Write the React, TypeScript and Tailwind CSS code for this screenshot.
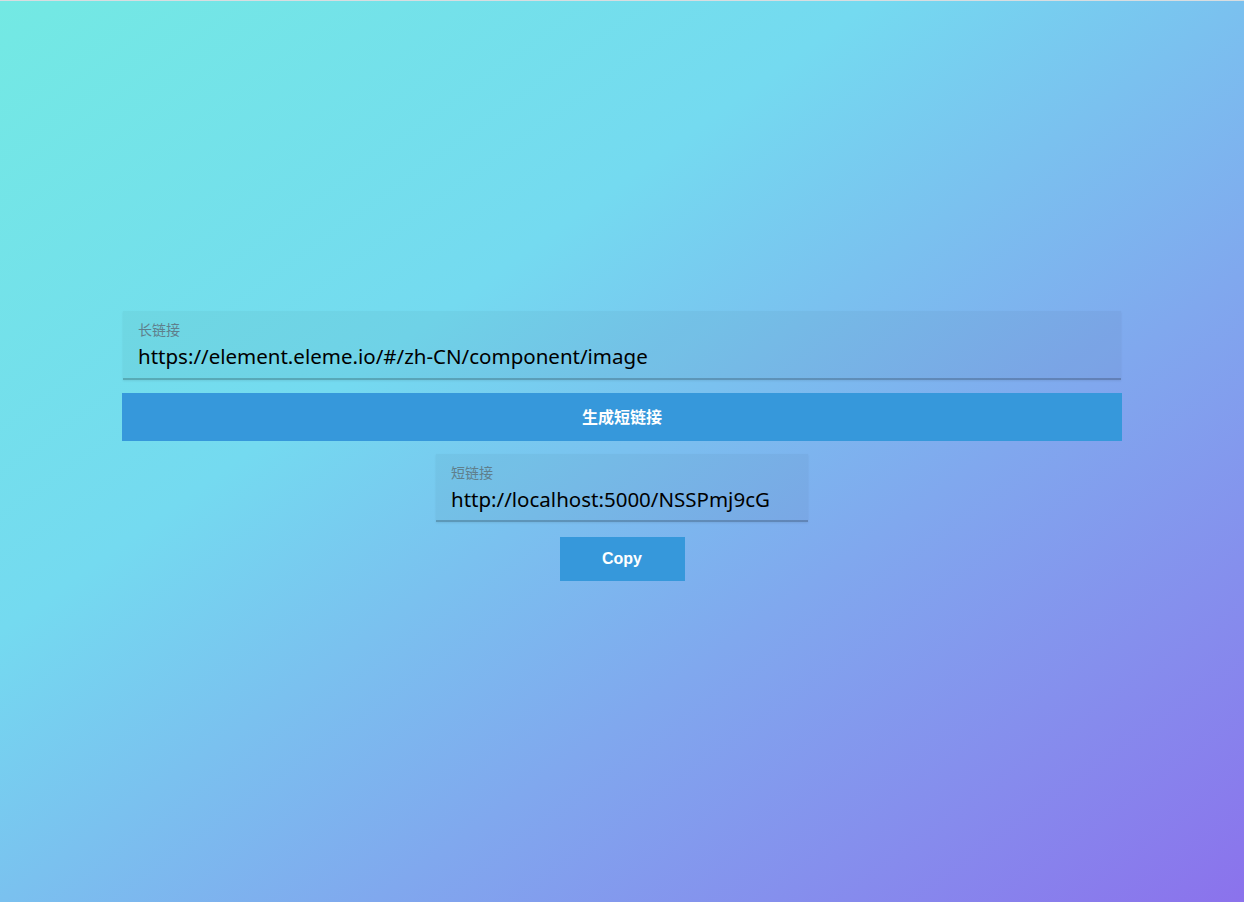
import React from 'react';

const Field = ({ label, value, className }: { label: string; value: string; className: string }) => (
  <div
    className={`${className} bg-black/[0.035] border-b-2 border-black/20 shadow-[0_1px_2px_rgba(0,0,0,0.08)] px-[15px] pt-[10px]`}
  >
    <div className="text-[14px] leading-[18px] text-[#5f7f8c]">{label}</div>
    <div className="text-[20.5px] leading-[34px] text-black">{value}</div>
  </div>
);

export default function App() {
  return (
    <div
      className="h-[902px] border-t border-[#d8dde0] flex flex-col items-center justify-center pb-[12px] bg-[linear-gradient(to_bottom_right,#73e9e3_0%,#74daf0_35%,#80a8ee_65%,#8b72ec_100%)]"
      style={{ fontFamily: '"Noto Sans", "Noto Sans CJK SC", sans-serif' }}
    >
      <Field label="长链接" value="https://element.eleme.io/#/zh-CN/component/image" className="w-[998px] pb-[5px]" />
      <button className="mt-[13px] w-[1000px] h-[48px] bg-[#3698db] text-white font-bold text-[16px]">
        生成短链接
      </button>
      <Field label="短链接" value="http://localhost:5000/NSSPmj9cG" className="mt-[13px] w-[372px] pb-[4px]" />
      <button
        className="mt-[15px] w-[125px] h-[44px] bg-[#3698db] text-white font-bold text-[16px]"
        style={{ fontFamily: '"Liberation Sans", Arial, sans-serif' }}
      >
        Copy
      </button>
    </div>
  );
}
